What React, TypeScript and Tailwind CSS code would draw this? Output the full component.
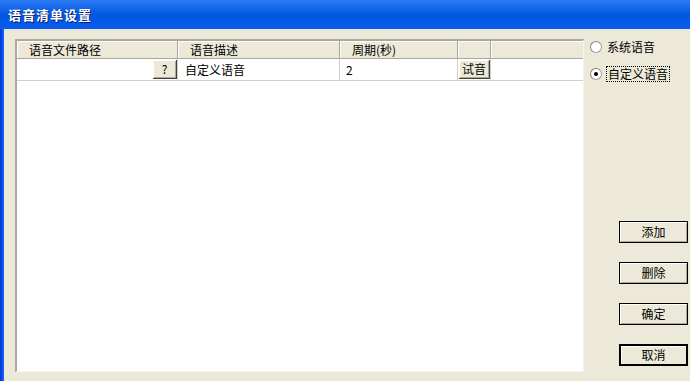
import React from "react";

const font = { fontFamily: '"Noto Sans CJK SC", "Noto Sans", sans-serif' };

function HeaderCell({ w, children }: { w: string; children?: React.ReactNode }) {
  return (
    <div
      className={`${w} h-full flex items-center pl-3 border-r border-[#a7a597] shadow-[inset_1px_1px_0_#fff] text-[12px] text-black`}
    >
      {children}
    </div>
  );
}

function SmallButton({ children }: { children: React.ReactNode }) {
  return (
    <div className="h-[19px] px-[3px] flex items-center justify-center bg-[#ece9d8] border-r border-b border-[#404040] shadow-[inset_1px_1px_0_#fff,inset_-1px_-1px_0_#aca899] text-[12px] leading-none">
      {children}
    </div>
  );
}

function DlgButton({ children, isDefault }: { children: React.ReactNode; isDefault?: boolean }) {
  return (
    <div
      className={`w-[69px] h-[22px] flex items-center justify-center bg-[#ece9d8] text-[12px] ${
        isDefault
          ? "border-2 border-black shadow-[inset_1px_1px_0_#fff]"
          : "border border-black shadow-[inset_1px_1px_0_#fff,inset_-1px_-1px_0_#aca899]"
      }`}
    >
      {children}
    </div>
  );
}

function Radio({ checked, label, focus }: { checked?: boolean; label: string; focus?: boolean }) {
  return (
    <div className="flex items-center gap-[5px] text-[12px]">
      <div className="w-[12px] h-[12px] rounded-full bg-white border border-[#a0a0a0] border-t-[#808080] border-l-[#808080] flex items-center justify-center">
        {checked && <div className="w-[4px] h-[4px] rounded-full bg-black" />}
      </div>
      <span className={focus ? "outline outline-1 outline-dotted outline-black px-[1px] leading-[14px]" : "leading-[14px]"}>
        {label}
      </span>
    </div>
  );
}

export default function App() {
  return (
    <div className="w-[690px] h-[381px] bg-[#ece9d8] flex flex-col overflow-hidden" style={font}>
      <div className="h-[29px] shrink-0 bg-gradient-to-b from-[#2a7bf5] via-[#0157e0] to-[#0a5cf0] flex items-center pl-[8px]">
        <span className="text-white font-bold text-[13px] tracking-[1px] [text-shadow:1px_1px_0_#0a1e6e]">语音清单设置</span>
      </div>
      <div className="flex-1 flex">
        <div className="w-[4px] bg-gradient-to-r from-[#0831d9] to-[#1666f5]" />
        <div className="flex-1 flex pl-[11px] pt-[10px] pb-[10px]">
          <div className="w-[569px] h-[333px] bg-white border-l-2 border-t-2 border-[#aca899] border-r border-b border-r-[#f5f4ee] border-b-[#f5f4ee] flex flex-col">
            <div className="h-[18px] flex bg-[#ece9d8] border-b border-[#aca899]">
              <HeaderCell w="w-[161px]">语音文件路径</HeaderCell>
              <HeaderCell w="w-[162px]">语音描述</HeaderCell>
              <HeaderCell w="w-[118px]">周期(秒)</HeaderCell>
              <HeaderCell w="w-[33px]" />
              <div className="flex-1 shadow-[inset_1px_1px_0_#fff]" />
            </div>
            <div className="h-[22px] flex border-b border-[#d4d0c8] text-[12px]">
              <div className="w-[161px] flex items-center justify-end border-r border-[#d4d0c8]">
                <div className="w-[24px]">
                  <SmallButton>?</SmallButton>
                </div>
              </div>
              <div className="w-[162px] flex items-center pl-[7px] border-r border-[#d4d0c8]">自定义语音</div>
              <div className="w-[118px] flex items-center pl-[6px] border-r border-[#d4d0c8]">2</div>
              <div className="w-[33px] flex items-center pl-[1px] border-r border-[#d4d0c8]">
                <SmallButton>试音</SmallButton>
              </div>
              <div className="flex-1" />
            </div>
          </div>
          <div className="flex-1 flex flex-col pl-[6px]">
            <div className="pt-[1px] flex flex-col gap-[13px]">
              <Radio label="系统语音" />
              <Radio label="自定义语音" checked focus />
            </div>
            <div className="mt-[140px] pl-[29px] flex flex-col gap-[19px]">
              <DlgButton>添加</DlgButton>
              <DlgButton>删除</DlgButton>
              <DlgButton>确定</DlgButton>
              <DlgButton isDefault>取消</DlgButton>
            </div>
          </div>
        </div>
      </div>
    </div>
  );
}
